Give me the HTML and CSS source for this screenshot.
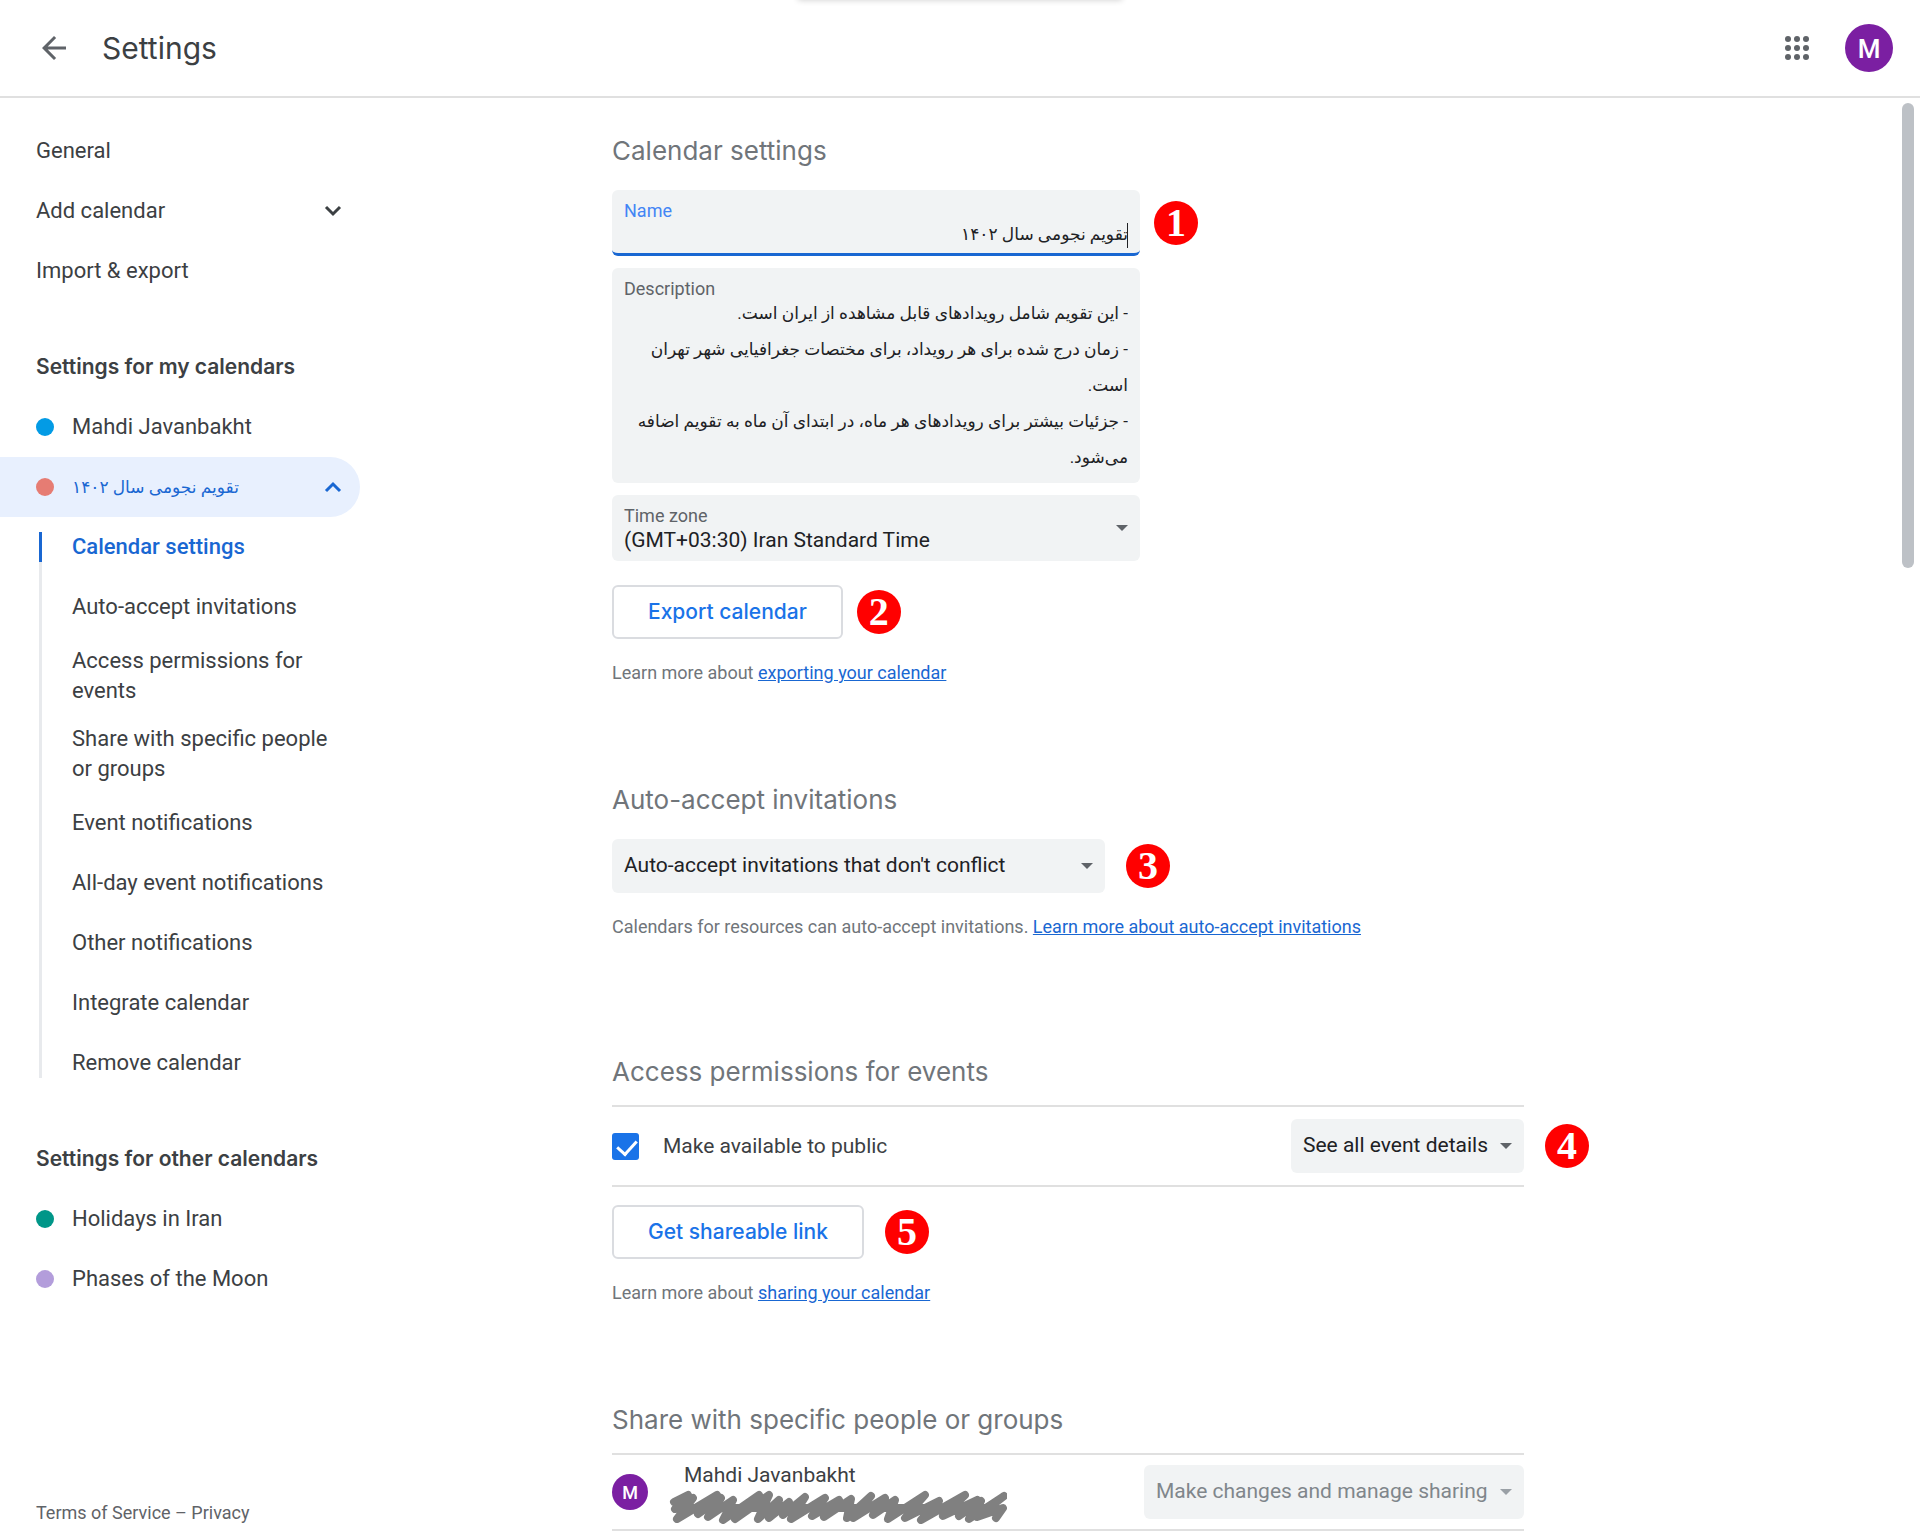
FILE: index.html
```html
<!DOCTYPE html>
<html lang="en">
  <head>
    <meta charset="UTF-8" />
    <title>Settings</title>
    <link rel="stylesheet" href="styles.css">
  </head>
  <body>
    <header class="topbar">
      <button class="icon-button" aria-label="Go back">
        <svg width="36" height="36" viewBox="0 0 24 24" fill="currentColor">
          <path d="M20 11H7.83l5.59-5.59L12 4l-8 8 8 8 1.41-1.41L7.83 13H20v-2z" />
        </svg>
      </button>
      <h1>Settings</h1>
      <button class="icon-button apps" aria-label="Apps">
        <svg width="36" height="36" viewBox="0 0 24 24" fill="currentColor">
          <circle cx="6" cy="6" r="2" /><circle cx="12" cy="6" r="2" /><circle cx="18" cy="6" r="2" />
          <circle cx="6" cy="12" r="2" /><circle cx="12" cy="12" r="2" /><circle cx="18" cy="12" r="2" />
          <circle cx="6" cy="18" r="2" /><circle cx="12" cy="18" r="2" /><circle cx="18" cy="18" r="2" />
        </svg>
      </button>
      <button class="avatar" aria-label="Account">M</button>
      <div class="toast-shadow"></div>
    </header>

    <div class="layout">
      <nav class="sidebar">
        <a class="nav-item" href="#general">General</a>
        <a class="nav-item" href="#add">Add calendar
          <svg class="chevron" width="18" height="12" viewBox="0 0 18 12"><path d="M2 2l7 7 7-7" /></svg>
        </a>
        <a class="nav-item" href="#import">Import &amp; export</a>

        <h2>Settings for my calendars</h2>
        <a class="nav-item" href="#mahdi"><span class="dot blue"></span>Mahdi Javanbakht</a>
        <a class="nav-item active" href="#astro"><span class="dot red"></span><span lang="fa" dir="rtl">تقویم نجومی سال ۱۴۰۲</span>
          <svg class="chevron" width="18" height="12" viewBox="0 0 18 12"><path d="M2 10l7-7 7 7" /></svg>
        </a>
        <div class="subnav">
          <a class="current" href="#calendar-settings">Calendar settings</a>
          <a href="#auto-accept">Auto-accept invitations</a>
          <a href="#access">Access permissions for events</a>
          <a href="#share">Share with specific people or groups</a>
          <a href="#event-notifications">Event notifications</a>
          <a href="#all-day">All-day event notifications</a>
          <a href="#other">Other notifications</a>
          <a href="#integrate">Integrate calendar</a>
          <a href="#remove">Remove calendar</a>
        </div>

        <h2>Settings for other calendars</h2>
        <a class="nav-item" href="#holidays"><span class="dot green"></span>Holidays in Iran</a>
        <a class="nav-item" href="#moon"><span class="dot purple"></span>Phases of the Moon</a>

        <footer><a href="#terms">Terms of Service</a> – <a href="#privacy">Privacy</a></footer>
      </nav>

      <main class="content">
        <section id="calendar-settings">
          <h2>Calendar settings</h2>
          <div class="fields">
            <div class="row">
              <div class="field focused">
                <label for="name">Name</label>
                <input type="text" id="name" lang="fa" dir="rtl" value="تقویم نجومی سال ۱۴۰۲" />
              </div>
              <span class="badge">1</span>
            </div>
            <div class="field">
              <label for="description">Description</label>
              <textarea id="description" rows="5" lang="fa" dir="rtl">- این تقویم شامل رویدادهای قابل مشاهده از ایران است.
- زمان درج شده برای هر رویداد، برای مختصات جغرافیایی شهر تهران است.
- جزئیات بیشتر برای رویدادهای هر ماه، در ابتدای آن ماه به تقویم اضافه می‌شود.</textarea>
            </div>
            <div class="field arrow">
              <label for="timezone">Time zone</label>
              <select id="timezone"><option>(GMT+03:30) Iran Standard Time</option></select>
            </div>
          </div>
          <div class="row">
            <button class="outlined">Export calendar</button>
            <span class="badge">2</span>
          </div>
          <p>Learn more about <a href="#export-help">exporting your calendar</a></p>
        </section>

        <section id="auto-accept">
          <h2>Auto-accept invitations</h2>
          <div class="row wide">
            <div class="picker arrow auto-picker">
              <select aria-label="Auto-accept invitations"><option>Auto-accept invitations that don't conflict</option></select>
            </div>
            <span class="badge">3</span>
          </div>
          <p>Calendars for resources can auto-accept invitations. <a href="#auto-help">Learn more about auto-accept invitations</a></p>
        </section>

        <section id="access" class="list-section">
          <h2>Access permissions for events</h2>
          <div class="row wide">
            <div class="setting">
              <input type="checkbox" id="public" checked />
              <label for="public">Make available to public</label>
              <div class="picker arrow details-picker">
                <select aria-label="Public access level"><option>See all event details</option></select>
              </div>
            </div>
            <span class="badge">4</span>
          </div>
          <div class="row wide link-row">
            <button class="outlined">Get shareable link</button>
            <span class="badge">5</span>
          </div>
          <p>Learn more about <a href="#share-help">sharing your calendar</a></p>
        </section>

        <section id="share" class="list-section">
          <h2>Share with specific people or groups</h2>
          <div class="setting person">
            <span class="avatar small">M</span>
            <div class="person-info">
              <span>Mahdi Javanbakht</span>
              <svg class="scribble" width="338" height="34" viewBox="0 0 338 34">
                <path d="M5 12L19 5 6 19 24 8 8 29 48 5 29 24 52 8 39 27 64 10 54 30 90 5 66 29 100 5 89 29 110 10 100 28 120 12 114 25 136 7 122 29 156 8 143 26 170 10 155 27 182 9 178 28 202 6 184 28 216 8 204 25 226 10 219 29 256 5 236 28 270 11 252 30 296 5 274 26 308 10 290 26 312 11 300 29 335 6 308 27 334 18 327 28" />
                <path d="M12 18H318" />
              </svg>
            </div>
            <div class="picker arrow disabled share-picker">
              <select aria-label="Sharing permission" disabled><option>Make changes and manage sharing</option></select>
            </div>
          </div>
        </section>
      </main>
      <div class="scroll-thumb"></div>
    </div>
  </body>
</html>
```
FILE: styles.css
```css
:root {
  --text: #3c4043;
  --muted: #70757a;
  --blue: #1a73e8;
  --dark-blue: #1967d2;
  --field: #f1f3f4;
  --line: #e0e0e0;
  --heading-font: Inter, "Open Sans", sans-serif;
}

* {
  box-sizing: border-box;
}

body {
  margin: 0;
  height: 100vh;
  display: flex;
  flex-direction: column;
  overflow: hidden;
  font-family: Roboto, "DejaVu Sans", sans-serif;
  font-size: 21px;
  line-height: 30px;
  color: var(--text);
  background: white;
}

a {
  color: inherit;
  text-decoration: none;
}

button,
input,
select,
textarea {
  font: inherit;
  color: inherit;
  margin: 0;
  padding: 0;
  border: none;
  background: none;
}

h1,
h2,
p {
  margin: 0;
  font-weight: 400;
}

/* Top bar */
.topbar {
  position: relative;
  display: flex;
  align-items: center;
  flex: none;
  height: 98px;
  padding: 0 27px 0 36px;
  border-bottom: 2px solid var(--line);
}

.topbar h1 {
  margin-left: 30px;
  font-family: var(--heading-font);
  font-size: 30px;
}

.icon-button {
  width: 36px;
  height: 36px;
  color: #5f6368;
}

.apps {
  margin: 0 30px 0 auto;
}

.avatar {
  display: flex;
  align-items: center;
  justify-content: center;
  width: 48px;
  height: 48px;
  padding-top: 2px;
  border-radius: 50%;
  background: #7b1fa2;
  color: white;
  font-size: 26px;
  font-weight: 500;
}

.avatar.small {
  width: 36px;
  height: 36px;
  font-size: 18px;
}

.toast-shadow {
  position: absolute;
  left: 50%;
  bottom: 100%;
  width: 324px;
  height: 20px;
  transform: translateX(-50%);
  box-shadow: 0 0 6px rgba(0, 0, 0, 0.2);
}

.layout {
  position: relative;
  display: grid;
  grid-template-columns: 360px 1fr;
  flex: 1;
  min-height: 0;
}

.scroll-thumb {
  position: absolute;
  top: 5px;
  right: 6px;
  width: 12px;
  height: 465px;
  border-radius: 6px;
  background: #bdc1c6;
}

/* Sidebar */
.sidebar {
  display: flex;
  flex-direction: column;
  padding-top: 23px;
  font-size: 22px;
}

.sidebar h2 {
  margin-top: 36px;
  padding: 15px 36px;
  font-family: var(--heading-font);
  font-size: 21px;
  font-weight: 600;
  white-space: nowrap;
}

.nav-item {
  display: flex;
  align-items: center;
  height: 60px;
  padding: 0 18px 0 36px;
}

.nav-item.active {
  border-radius: 0 30px 30px 0;
  background: #e8f0fe;
  color: var(--dark-blue);
}

.nav-item [lang="fa"] {
  font-size: 17px;
}

.chevron {
  margin-left: auto;
  fill: none;
  stroke: currentColor;
  stroke-width: 3;
}

.dot {
  width: 18px;
  height: 18px;
  margin-right: 18px;
  border-radius: 50%;
}

.blue {
  background: #039be5;
}

.red {
  background: #e67c73;
}

.green {
  background: #009688;
}

.purple {
  background: #b39ddb;
}

.subnav {
  position: relative;
  display: flex;
  flex-direction: column;
}

.subnav::before {
  content: "";
  position: absolute;
  left: 39px;
  top: 15px;
  bottom: 15px;
  width: 3px;
  background: #e8eaed;
}

.subnav a {
  display: flex;
  align-items: center;
  min-height: 60px;
  padding: 9px 30px 9px 72px;
}

.subnav .current {
  position: relative;
  color: var(--dark-blue);
  font-weight: 500;
}

.subnav .current::before {
  content: "";
  position: absolute;
  left: 39px;
  top: 15px;
  width: 3px;
  height: 30px;
  background: var(--dark-blue);
}

.sidebar footer {
  margin-top: auto;
  padding: 0 36px 8px;
  font-size: 18px;
  color: #5f6368;
}

/* Content */
.content {
  min-height: 0;
  padding: 36px 36px 0 252px;
  overflow: hidden;
}

.content section {
  margin-bottom: 95px;
}

.content #auto-accept {
  margin-bottom: 113px;
}

.content h2 {
  margin-bottom: 23px;
  font-family: var(--heading-font);
  font-size: 26px;
  line-height: 33px;
  color: var(--muted);
}

.content .list-section h2 {
  margin-bottom: 17px;
}

.content p {
  margin-top: 19px;
  font-size: 18px;
  color: var(--muted);
}

.content p a {
  color: var(--dark-blue);
  text-decoration: underline;
}

.row {
  display: flex;
  align-items: center;
  gap: 14px;
}

.row.wide {
  gap: 21px;
}

.fields {
  display: flex;
  flex-direction: column;
  gap: 12px;
  margin-bottom: 24px;
}

.field {
  position: relative;
  width: 528px;
  padding: 9px 12px;
  border-radius: 6px;
  background: var(--field);
}

.field label {
  display: block;
  height: 24px;
  font-size: 18px;
  line-height: 24px;
  color: #5f6368;
}

.field input,
.field textarea,
.field select {
  display: block;
  width: 100%;
  outline: none;
  appearance: none;
  color: #202124;
}

.field input,
.field select {
  height: 24px;
  line-height: 24px;
}

.field [lang="fa"] {
  font-size: 17px;
}

.field textarea {
  height: 179px;
  margin-top: -6px;
  line-height: 36px;
  resize: none;
  overflow: hidden;
}

.field.focused {
  border-bottom: 3px solid var(--dark-blue);
  padding-bottom: 6px;
}

.field.focused input {
  padding-bottom: 3px;
}

.field.focused label {
  color: #4285f4;
}

/* Text cursor */
.field.focused::after {
  content: "";
  position: absolute;
  right: 12px;
  bottom: 5px;
  width: 1px;
  height: 25px;
  background: #202124;
}

.arrow {
  position: relative;
}

.arrow::after {
  content: "";
  position: absolute;
  right: 12px;
  top: calc(50% - 3px);
  border: 6px solid transparent;
  border-top-color: #5f6368;
  border-bottom: none;
  pointer-events: none;
}

.picker {
  height: 54px;
  border-radius: 6px;
  background: var(--field);
}

.picker select {
  width: 100%;
  height: 51px;
  padding: 0 30px 0 12px;
  appearance: none;
  color: #202124;
}

.picker.disabled select {
  color: #80868b;
  opacity: 1;
}

.picker.disabled::after {
  border-top-color: #9aa0a6;
}

.auto-picker {
  width: 493px;
}

.details-picker {
  width: 233px;
}

.share-picker {
  width: 380px;
}

.outlined {
  height: 54px;
  padding: 0 34px;
  border: 2px solid #dadce0;
  border-radius: 6px;
  font-family: var(--heading-font);
  font-size: 21px;
  font-weight: 500;
  color: var(--blue);
}

.badge {
  display: flex;
  align-items: center;
  justify-content: center;
  flex: none;
  width: 44px;
  height: 44px;
  border-radius: 50%;
  background: red;
  color: white;
  font-family: "Liberation Serif", serif;
  font-size: 40px;
  font-weight: 700;
}

.setting {
  display: flex;
  align-items: center;
  width: 912px;
  height: 82px;
  border: solid var(--line);
  border-width: 2px 0;
}

.setting .picker {
  margin-left: auto;
}

.setting input {
  appearance: none;
  position: relative;
  width: 27px;
  height: 27px;
  margin-right: 24px;
  border-radius: 3px;
  background: var(--blue);
}

.setting input::after {
  content: "";
  position: absolute;
  left: 9px;
  top: 3px;
  width: 9px;
  height: 16px;
  border: solid white;
  border-width: 0 3px 3px 0;
  transform: rotate(42deg);
}

.link-row {
  margin-top: 18px;
}

.setting.person {
  height: 78px;
}

.person-info {
  display: flex;
  flex-direction: column;
  margin-left: 21px;
}

.person-info span {
  padding-left: 15px;
}

.scribble {
  fill: none;
  stroke: #808080;
  stroke-width: 8;
  stroke-linejoin: round;
  stroke-linecap: round;
}
```
